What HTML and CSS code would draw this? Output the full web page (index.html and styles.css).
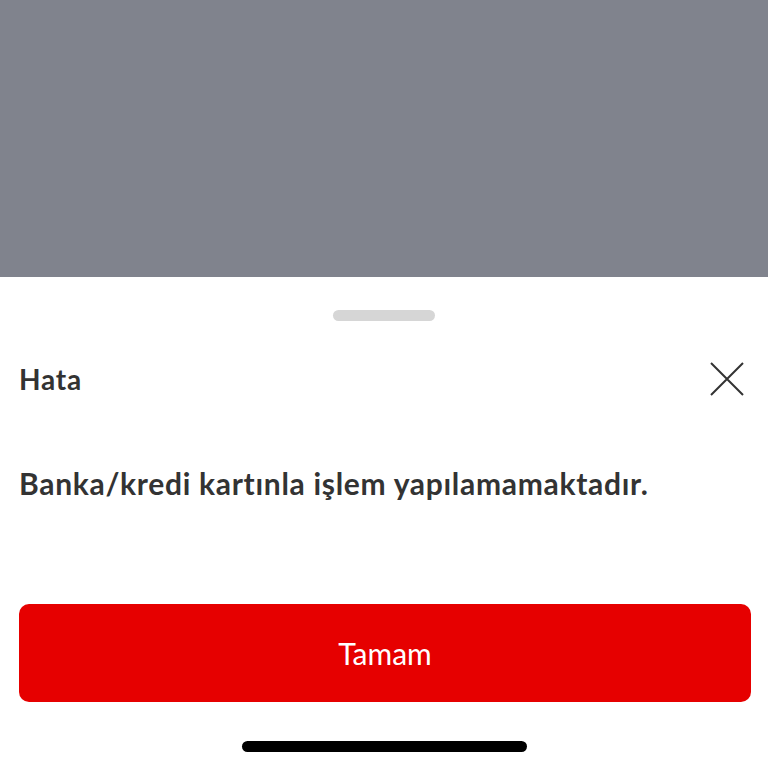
FILE: index.html
```html
<!DOCTYPE html>
<html lang="tr">
<head>
    <meta charset="UTF-8">
    <meta name="viewport" content="width=device-width, initial-scale=1.0">
    <title>Hata</title>
    <link rel="stylesheet" href="styles.css">
</head>
<body>
    <div class="backdrop"></div>
    <div class="sheet">
        <div class="grabber"></div>
        <div class="sheet-header">
            <h2 class="sheet-title">Hata</h2>
            <button class="close-btn" aria-label="Kapat">
                <svg width="34" height="34" viewBox="0 0 34 34">
                    <path d="M1 1 L33 33 M33 1 L1 33" stroke="#333" stroke-width="2" fill="none"/>
                </svg>
            </button>
        </div>
        <p class="message">Banka/kredi kartınla işlem yapılamamaktadır.</p>
        <button class="primary-btn">Tamam</button>
        <div class="home-indicator"></div>
    </div>
</body>
</html>
```

FILE: styles.css
```css
/* CSS */
body {
    margin: 0;
    font-family: Lato, "Liberation Sans", sans-serif;
    color: #333;
    background: #fff;
}

.backdrop {
    height: 277px;
    background: #80838d;
}

.sheet {
    display: flex;
    flex-direction: column;
    padding: 0 17px 0 19px;
}

.grabber {
    align-self: center;
    width: 102px;
    height: 11px;
    margin-top: 33px;
    margin-left: -2px;
    border-radius: 6px;
    background: #d6d6d6;
}

.sheet-header {
    display: flex;
    align-items: center;
    justify-content: space-between;
    height: 34px;
    margin-top: 41px;
    padding-right: 7px;
}

.sheet-title {
    margin: 0;
    font-size: 28px;
    font-weight: 700;
    line-height: 34px;
    letter-spacing: 0.8px;
}

.close-btn {
    border: none;
    background: none;
    padding: 0;
    width: 34px;
    height: 34px;
    cursor: pointer;
}

.close-btn svg {
    display: block;
}

.message {
    margin: 70px 0 0;
    font-size: 30px;
    font-weight: 700;
    line-height: 34px;
    letter-spacing: 0.7px;
}

.primary-btn {
    margin-top: 104px;
    height: 98px;
    border: none;
    border-radius: 10px;
    background: #e60000;
    color: #fff;
    font-family: Lato, "Liberation Sans", sans-serif;
    font-size: 30px;
    cursor: pointer;
}

.home-indicator {
    align-self: center;
    width: 285px;
    height: 11px;
    margin-top: 39px;
    margin-left: -2px;
    border-radius: 6px;
    background: #000;
}
```
